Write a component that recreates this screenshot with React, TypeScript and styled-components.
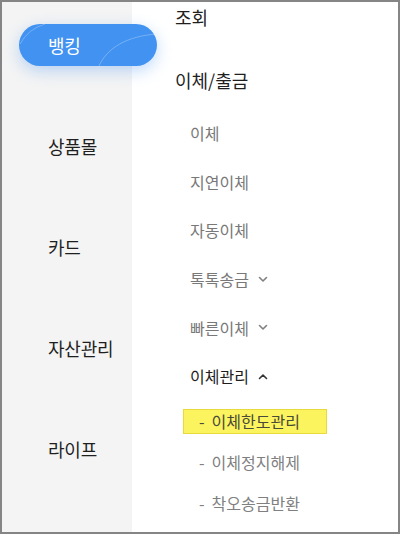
import React from "react";
import styled, { createGlobalStyle } from "styled-components";

const Global = createGlobalStyle`
  html, body { margin: 0; padding: 0; background: #fff; }
  body { font-family: "Noto Sans CJK KR", "Noto Sans", sans-serif; }
  * { box-sizing: border-box; }
`;

const Frame = styled.div`
  width: 400px;
  height: 534px;
  border: 2px solid #858585;
  display: grid;
  grid-template-columns: 130px 1fr;
  overflow: hidden;
  background: #fff;
`;

const Sidebar = styled.nav`
  background: #f4f4f4;
  display: flex;
  flex-direction: column;
  gap: 59px;
  padding-top: 22px;
  position: relative;
  z-index: 1;
`;

const SideItem = styled.div<{ $active?: boolean }>`
  position: relative;
  width: 138px;
  height: 42px;
  margin-left: 17px;
  padding-left: 29px;
  display: flex;
  align-items: center;
  font-size: 18px;
  letter-spacing: -0.2px;
  color: ${(p) => (p.$active ? "#ffffff" : "#1f1f1f")};
  background: ${(p) => (p.$active ? "#4192f1" : "transparent")};
  border-radius: 21px;
  box-shadow: ${(p) =>
    p.$active ? "0 5px 16px rgba(60, 140, 240, 0.32)" : "none"};
  overflow: hidden;
`;

const Arcs = styled.svg`
  position: absolute;
  left: 0;
  top: 0;
  pointer-events: none;
`;

const SideLabel = styled.span`
  position: relative;
`;

const Content = styled.main`
  padding-left: 43px;
  display: flex;
  flex-direction: column;
`;

const Title = styled.div<{ $gap?: number }>`
  height: 30px;
  line-height: 30px;
  font-size: 18px;
  color: #1f1f1f;
  margin-top: ${(p) => p.$gap ?? 0}px;
`;

const SubList = styled.div`
  margin-top: 14px;
  padding-left: 15px;
  display: flex;
  flex-direction: column;
`;

const SubItem = styled.div<{ $open?: boolean }>`
  height: 48.6px;
  display: flex;
  align-items: center;
  gap: 9px;
  font-size: 16px;
  color: ${(p) => (p.$open ? "#1d1d1d" : "#787878")};
`;

const DeepList = styled.div`
  padding-left: 8px;
  display: flex;
  flex-direction: column;
`;

const DeepRow = styled.div`
  height: 41px;
  display: flex;
  align-items: center;
`;

const DeepItem = styled.span<{ $mark?: boolean }>`
  display: inline-flex;
  align-items: center;
  height: 25px;
  width: 144px;
  padding-left: 15px;
  font-size: 16px;
  color: ${(p) => (p.$mark ? "#4a4a3a" : "#808080")};
  background: ${(p) => (p.$mark ? "#fcf45e" : "transparent")};
  border: 1px solid ${(p) => (p.$mark ? "#e6da3c" : "transparent")};
  white-space: nowrap;
`;

const Dash = styled.span`
  margin-right: 7px;
`;

const Chevron = ({ up, color }: { up?: boolean; color: string }) => (
  <svg width="10" height="7" viewBox="0 0 10 7" fill="none">
    <path
      d={up ? "M1.5 5.5 L5 2 L8.5 5.5" : "M1.5 1.5 L5 5 L8.5 1.5"}
      stroke={color}
      strokeWidth="1.6"
      strokeLinecap="round"
      strokeLinejoin="round"
    />
  </svg>
);

const sideItems = ["뱅킹", "상품몰", "카드", "자산관리", "라이프"];

type Sub = { label: string; chevron?: "down" | "up"; open?: boolean };
const subItems: Sub[] = [
  { label: "이체" },
  { label: "지연이체" },
  { label: "자동이체" },
  { label: "톡톡송금", chevron: "down" },
  { label: "빠른이체", chevron: "down" },
  { label: "이체관리", chevron: "up", open: true },
];

const deepItems = ["이체한도관리", "이체정지해제", "착오송금반환"];

export default function App() {
  return (
    <>
      <Global />
      <Frame>
        <Sidebar>
          {sideItems.map((s, i) => (
            <SideItem key={s} $active={i === 0}>
              {i === 0 && (
                <Arcs width="138" height="42" viewBox="0 0 138 42" fill="none">
                  <path
                    d="M1 20 Q 9 5 26 0"
                    stroke="rgba(255,255,255,0.28)"
                    strokeWidth="1"
                  />
                  <path
                    d="M80 42 C 88 24, 108 12, 138 10"
                    stroke="rgba(255,255,255,0.28)"
                    strokeWidth="1"
                  />
                </Arcs>
              )}
              <SideLabel>{s}</SideLabel>
            </SideItem>
          ))}
        </Sidebar>
        <Content>
          <Title>조회</Title>
          <Title $gap={33}>이체/출금</Title>
          <SubList>
            {subItems.map((s) => (
              <SubItem key={s.label} $open={s.open}>
                <span>{s.label}</span>
                {s.chevron && (
                  <Chevron
                    up={s.chevron === "up"}
                    color={s.open ? "#333" : "#808080"}
                  />
                )}
              </SubItem>
            ))}
          </SubList>
          <DeepList>
            {deepItems.map((d, i) => (
              <DeepRow key={d}>
                <DeepItem $mark={i === 0}>
                  <Dash>-</Dash>
                  {d}
                </DeepItem>
              </DeepRow>
            ))}
          </DeepList>
        </Content>
      </Frame>
    </>
  );
}
